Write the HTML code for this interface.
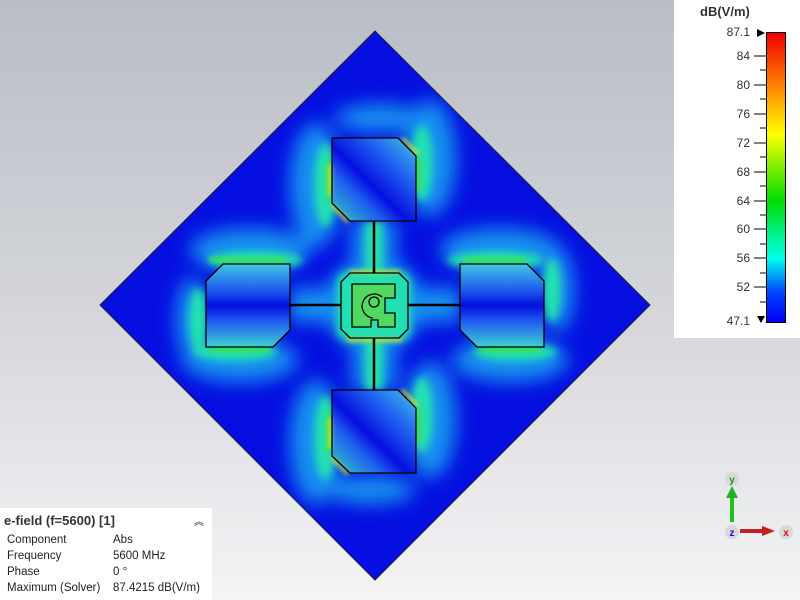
<!DOCTYPE html>
<html><head><style>
body{margin:0;width:800px;height:600px;overflow:hidden;font-family:"Liberation Sans",sans-serif;background:linear-gradient(#b9bdc5,#d3d5da 50%,#f4f4f6);position:relative}
#leg{position:absolute;left:674px;top:0;width:126px;height:338px;background:#fff}
.t{position:absolute;font-size:12px;color:#333;right:50px;text-align:right}
#info{position:absolute;left:0;top:508px;width:212px;height:92px;background:#fff;font-size:11.5px;color:#222}
#info div{position:absolute}
</style></head><body>
<svg width="800" height="600" style="position:absolute;left:0;top:0">
<defs>
<clipPath id="dc"><polygon points="375,31 650,305 375,580 100,305"/></clipPath>
<filter id="b10"><feGaussianBlur stdDeviation="9"/></filter>
<filter id="b5"><feGaussianBlur stdDeviation="4"/></filter>
<filter id="b3"><feGaussianBlur stdDeviation="2"/></filter>
<linearGradient id="gd" x1="0" y1="1" x2="1" y2="0">
<stop offset="0" stop-color="#30d0c0"/><stop offset="0.3" stop-color="#2060f0"/><stop offset="0.45" stop-color="#0510e0"/><stop offset="0.7" stop-color="#2060f0"/><stop offset="1" stop-color="#40c8e8"/></linearGradient>
<linearGradient id="gv" x1="0" y1="0" x2="0" y2="1">
<stop offset="0" stop-color="#40c8e0"/><stop offset="0.3" stop-color="#2060f0"/><stop offset="0.5" stop-color="#0510e0"/><stop offset="0.7" stop-color="#2060f0"/><stop offset="1" stop-color="#40d0d0"/></linearGradient>
</defs>
<polygon points="375,31 650,305 375,580 100,305" fill="#0510e0" stroke="#223" stroke-width="1"/>
<g clip-path="url(#dc)">
<g filter="url(#b10)" fill="#1890f0">
<ellipse cx="316" cy="185" rx="26" ry="62"/><ellipse cx="430" cy="158" rx="26" ry="58"/><ellipse cx="380" cy="118" rx="45" ry="14"/>
<ellipse cx="316" cy="442" rx="26" ry="62"/><ellipse cx="430" cy="420" rx="26" ry="58"/><ellipse cx="370" cy="490" rx="45" ry="14"/>
<ellipse cx="250" cy="250" rx="60" ry="22"/><ellipse cx="240" cy="360" rx="58" ry="22"/><ellipse cx="192" cy="320" rx="16" ry="42"/>
<ellipse cx="500" cy="250" rx="60" ry="22"/><ellipse cx="510" cy="360" rx="58" ry="22"/><ellipse cx="558" cy="290" rx="16" ry="42"/>
<ellipse cx="374" cy="305" rx="50" ry="47"/>
<rect x="352" y="220" width="44" height="170"/><rect x="290" y="288" width="170" height="34"/>
</g>
<g filter="url(#b5)" fill="#20e0b0">
<ellipse cx="325" cy="185" rx="11" ry="42"/><ellipse cx="422" cy="163" rx="11" ry="38"/>
<ellipse cx="325" cy="438" rx="11" ry="42"/><ellipse cx="422" cy="415" rx="11" ry="38"/>
<ellipse cx="255" cy="260" rx="48" ry="9"/><ellipse cx="235" cy="352" rx="42" ry="9"/><ellipse cx="198" cy="320" rx="9" ry="32"/>
<ellipse cx="495" cy="260" rx="48" ry="9"/><ellipse cx="515" cy="352" rx="42" ry="9"/><ellipse cx="552" cy="290" rx="9" ry="32"/>
<rect x="365" y="222" width="18" height="50"/><rect x="365" y="340" width="18" height="50"/>
<rect x="337" y="271" width="74" height="70" rx="12"/>
</g>
<g filter="url(#b3)" fill="none" stroke="#40e040" stroke-width="4">
<path d="M328,200 L328,160"/><path d="M328,452 L328,412"/>
<path d="M419,158 L419,190"/><path d="M419,410 L419,442"/>
<path d="M210,260 L285,260"/><path d="M210,350 L270,350"/>
<path d="M465,260 L525,260"/><path d="M480,350 L540,350"/>
</g>
<polygon points="332,138 398,138 416,156 416,221 350,221 332,203" fill="url(#gd)"/>
<polygon points="332,390 398,390 416,408 416,473 350,473 332,456" fill="url(#gd)"/>
<polygon points="223,264 290,264 290,330 273,347 206,347 206,281" fill="url(#gv)"/>
<polygon points="460,264 527,264 544,281 544,347 477,347 460,330" fill="url(#gv)"/>
<g filter="url(#b3)" fill="none" stroke="#e8e020" stroke-width="3">
<path d="M402,138 L418,154"/><path d="M332,205 L348,222"/>
<path d="M402,390 L418,406"/><path d="M332,458 L348,474"/>
<path d="M330,195 L330,165"/><path d="M330,448 L330,418"/>
<path d="M350,272 L400,272"/><path d="M347,340 L402,340"/>
</g>
<g fill="none" stroke="#000" stroke-width="1.3">
<polygon points="332,138 398,138 416,156 416,221 350,221 332,203"/>
<polygon points="332,390 398,390 416,408 416,473 350,473 332,456"/>
<polygon points="223,264 290,264 290,330 273,347 206,347 206,281"/>
<polygon points="460,264 527,264 544,281 544,347 477,347 460,330"/>
<polygon points="350,273 399,273 408,282 408,329 399,338 350,338 341,329 341,282"/>
<polygon points="352,284 395,284 395,298 385,298 385,313 395,313 395,327 378,327 378,320 371,320 371,327 352,327" fill="#50d860"/>
<path d="M382,297 A12,12 0 1 0 373,318" />
<circle cx="374" cy="302" r="5"/>
</g>
<g stroke="#000" stroke-width="2.5">
<line x1="374" y1="221" x2="374" y2="273"/><line x1="374" y1="338" x2="374" y2="390"/>
<line x1="290" y1="305" x2="341" y2="305"/><line x1="408" y1="305" x2="460" y2="305"/>
</g>
</g>
<line x1="732" y1="495" x2="732" y2="522" stroke="#20c020" stroke-width="4"/>
<polygon points="726,498 732,486 738,498" fill="#20b020"/>
<line x1="740" y1="531" x2="765" y2="531" stroke="#c02020" stroke-width="4"/>
<polygon points="762,526 775,531 762,536" fill="#c02020"/>
<circle cx="732" cy="479" r="7" fill="#d8d8d8"/><text x="732" y="483" font-size="10" fill="#1a9a1a" text-anchor="middle" font-weight="bold">y</text>
<circle cx="732" cy="532" r="7" fill="#d8d8d8"/><text x="732" y="536" font-size="10" fill="#1010e0" text-anchor="middle" font-weight="bold">z</text>
<circle cx="786" cy="532" r="7" fill="#d8d8d8"/><text x="786" y="536" font-size="10" fill="#e01010" text-anchor="middle" font-weight="bold">x</text>
</svg>
<div id="leg">
<div style="position:absolute;left:26px;top:4px;font-size:13px;font-weight:bold;color:#333">dB(V/m)</div>
<div style="position:absolute;left:92px;top:32px;width:18px;height:289px;border:1px solid #000;background:linear-gradient(#f00000,#ff8000 18%,#ffff00 35%,#00dd00 58%,#00ffee 78%,#0040ff 90%,#0000f0)"></div>
<svg width="126" height="338" style="position:absolute;left:0;top:0">
<g stroke="#000" stroke-width="1">
<line x1="80" y1="56" x2="92" y2="56"/><line x1="80" y1="85" x2="92" y2="85"/><line x1="80" y1="114" x2="92" y2="114"/><line x1="80" y1="143" x2="92" y2="143"/><line x1="80" y1="172" x2="92" y2="172"/><line x1="80" y1="201" x2="92" y2="201"/><line x1="80" y1="229" x2="92" y2="229"/><line x1="80" y1="258" x2="92" y2="258"/><line x1="80" y1="287" x2="92" y2="287"/>
<line x1="86" y1="70" x2="92" y2="70"/><line x1="86" y1="99" x2="92" y2="99"/><line x1="86" y1="128" x2="92" y2="128"/><line x1="86" y1="157" x2="92" y2="157"/><line x1="86" y1="186" x2="92" y2="186"/><line x1="86" y1="215" x2="92" y2="215"/><line x1="86" y1="244" x2="92" y2="244"/><line x1="86" y1="273" x2="92" y2="273"/><line x1="86" y1="302" x2="92" y2="302"/>
</g>
<polygon points="83,29 91,33 83,37" fill="#000"/><polygon points="83,316 91,316 87,323" fill="#000"/>
</svg>
<div class="t" style="top:25px">87.1</div><div class="t" style="top:49px">84</div><div class="t" style="top:78px">80</div><div class="t" style="top:107px">76</div><div class="t" style="top:136px">72</div><div class="t" style="top:165px">68</div><div class="t" style="top:194px">64</div><div class="t" style="top:222px">60</div><div class="t" style="top:251px">56</div><div class="t" style="top:280px">52</div><div class="t" style="top:314px">47.1</div>
</div>
<div id="info">
<div style="left:4px;top:5px;font-size:13px;font-weight:bold;color:#333">e-field (f=5600) [1]</div>
<div style="left:194px;top:5px;font-size:10px">︽</div>
<div style="left:7px;top:26px">Component</div><div style="left:113px;top:26px">Abs</div>
<div style="left:7px;top:42px">Frequency</div><div style="left:113px;top:42px">5600 MHz</div>
<div style="left:7px;top:58px">Phase</div><div style="left:113px;top:58px">0 °</div>
<div style="left:7px;top:74px">Maximum (Solver)</div><div style="left:113px;top:74px">87.4215 dB(V/m)</div>
</div>
</body></html>
